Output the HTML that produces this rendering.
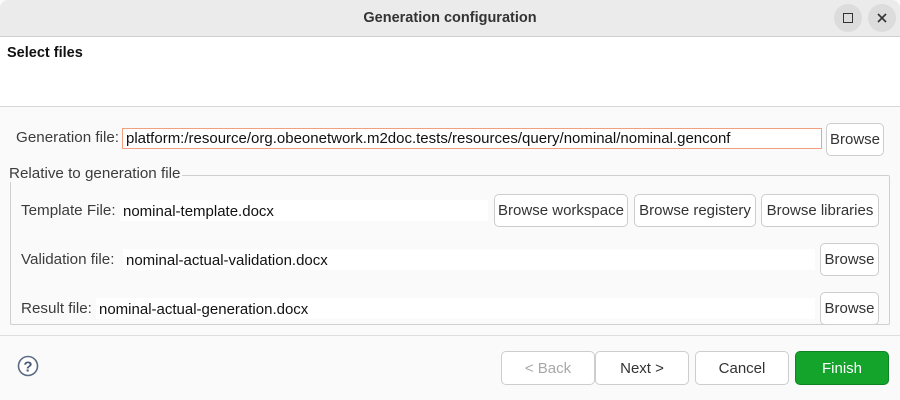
<!DOCTYPE html>
<html><head><meta charset="utf-8"><style>
*{box-sizing:border-box;margin:0;padding:0}
body{width:900px;height:400px;overflow:hidden;background:#fafafa;font-family:"Liberation Sans","DejaVu Sans",sans-serif;font-size:15px;color:#3c3c3c;position:relative}
.a{position:absolute}
.title{left:0;top:0;width:900px;height:37px;background:#ebebeb;border-bottom:1px solid #cfcfcf;border-radius:8px 8px 0 0}
.title span{position:absolute;left:0;right:0;top:10px;text-align:center;font-weight:bold;font-size:14.5px;color:#333}
.wb{width:28px;height:28px;border-radius:50%;background:#dcdcdc;top:4px}
.hdr{left:0;top:37px;width:900px;height:70px;background:#fff;border-bottom:1px solid #d8d8d8}
.btn{border:1px solid #cdcdcd;border-radius:5px;background:#fff;text-align:center;font-size:15px;color:#333;display:flex;align-items:center;justify-content:center;white-space:nowrap}
.fld{background:#fff;color:#111;font-size:15px;padding-left:3px;line-height:23px;white-space:nowrap;overflow:hidden}
.lbl{font-size:15.2px;color:#3c3c3c;white-space:nowrap}
</style></head><body>
<div class="a title"><span>Generation configuration</span></div>
<div class="a wb" style="left:834px"><div class="a" style="left:9px;top:9px;width:10px;height:10px;border:1.5px solid #333"></div></div>
<div class="a wb" style="left:868px"><svg class="a" style="left:8px;top:8px" width="12" height="12"><path d="M2 2L10 10M10 2L2 10" stroke="#333" stroke-width="1.6"/></svg></div>
<div class="a hdr"><div class="a" style="left:7px;top:8px;font-weight:bold;font-size:14.5px;color:#111">Select files</div></div>

<div class="a lbl" style="left:16px;top:129px">Generation file:</div>
<div class="a fld" style="left:122px;top:128px;width:700px;height:21px;border:1px solid #f2a07f;line-height:20px">platform:/resource/org.obeonetwork.m2doc.tests/resources/query/nominal/nominal.genconf</div>
<div class="a btn" style="left:826px;top:123px;width:58px;height:33px">Browse</div>

<div class="a" style="left:10px;top:175px;width:880px;height:150px;border:1px solid #cfcfcf;border-radius:2px"></div>
<div class="a lbl" style="left:9px;top:165px;background:#fafafa;padding-right:2px">Relative to generation file</div>

<div class="a lbl" style="left:21px;top:202px">Template File:</div>
<div class="a fld" style="left:120px;top:200px;width:368px;height:21px">nominal-template.docx</div>
<div class="a btn" style="left:494px;top:194px;width:134px;height:33px">Browse workspace</div>
<div class="a btn" style="left:634px;top:194px;width:122px;height:33px">Browse registery</div>
<div class="a btn" style="left:761px;top:194px;width:118px;height:33px">Browse libraries</div>

<div class="a lbl" style="left:21px;top:251px">Validation file:</div>
<div class="a fld" style="left:123px;top:249px;width:692px;height:21px">nominal-actual-validation.docx</div>
<div class="a btn" style="left:820px;top:243px;width:59px;height:33px">Browse</div>

<div class="a lbl" style="left:21px;top:300px">Result file:</div>
<div class="a fld" style="left:96px;top:298px;width:719px;height:21px">nominal-actual-generation.docx</div>
<div class="a" style="left:820px;top:292px;width:59px;height:32px;overflow:hidden"><div class="btn" style="width:59px;height:33px">Browse</div></div>

<div class="a" style="left:0;top:335px;width:900px;height:1px;background:#dedede"></div>
<svg class="a" style="left:17px;top:355px" width="22" height="22"><circle cx="11" cy="11" r="9.5" fill="#fff" stroke="#5a6a84" stroke-width="1.6"/><text x="11" y="16.5" text-anchor="middle" font-family="Liberation Sans" font-weight="bold" font-size="15" fill="#4a5a78">?</text></svg>

<div class="a btn" style="left:501px;top:351px;width:94px;height:34px;color:#a8a8a8">&lt; Back</div>
<div class="a btn" style="left:595px;top:351px;width:94px;height:34px">Next &gt;</div>
<div class="a btn" style="left:695px;top:351px;width:94px;height:34px">Cancel</div>
<div class="a btn" style="left:795px;top:351px;width:94px;height:34px;background:#14a42b;border-color:#0f8424;color:#fff">Finish</div>
</body></html>
